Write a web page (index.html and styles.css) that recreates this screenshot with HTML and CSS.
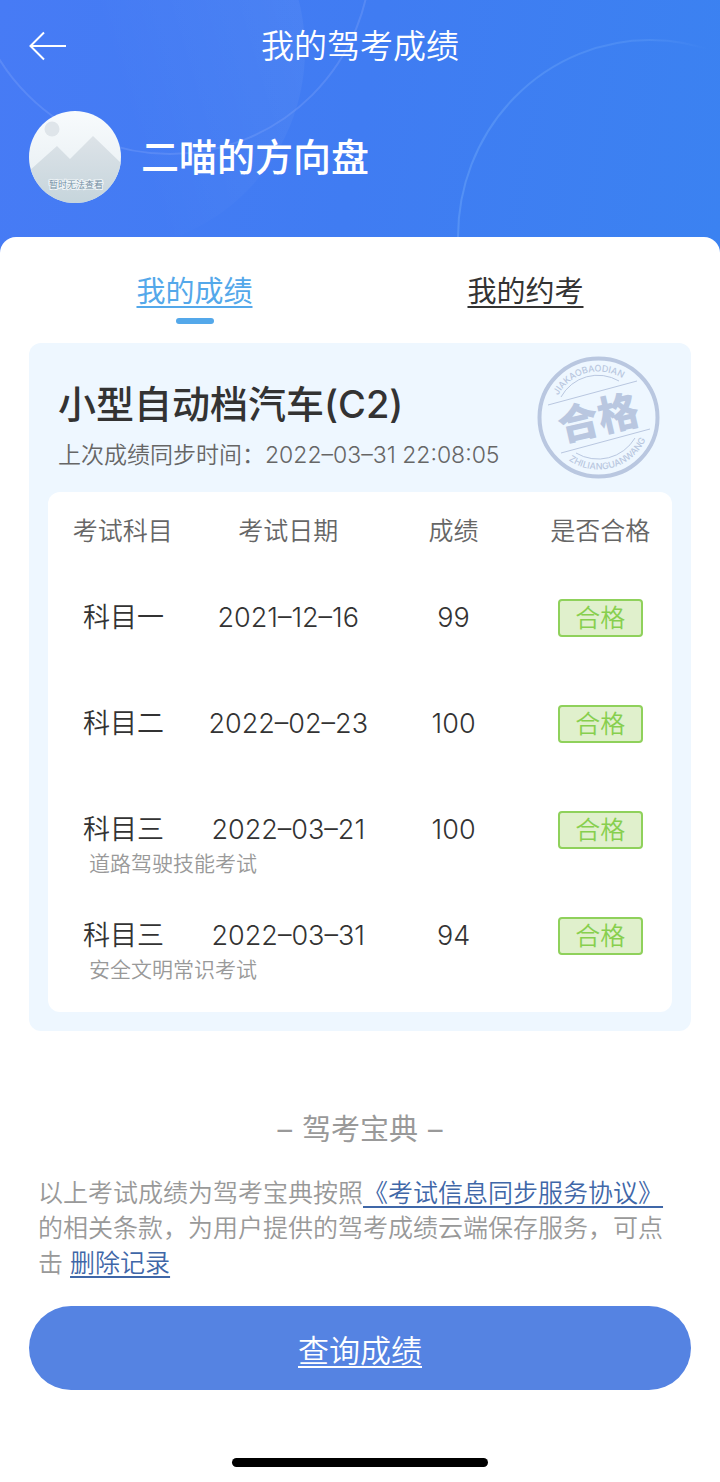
FILE: index.html
```html
<!DOCTYPE html>
<html lang="zh-CN">
<head>
  <meta charset="UTF-8" />
  <meta name="viewport" content="width=device-width, initial-scale=1" />
  <title>我的驾考成绩</title>
  <link rel="stylesheet" href="styles.css">
</head>
<body>
  <header class="header">
    <svg class="header-bg" viewBox="0 0 720 260" preserveAspectRatio="xMidYMin slice" aria-hidden="true">
      <defs>
        <linearGradient id="disk" x1="0" y1="0.300" x2="1" y2="0">
          <stop offset="0.4" stop-color="#fff" stop-opacity="0" />
          <stop offset="1" stop-color="#fff" stop-opacity="0.06" />
        </linearGradient>
        <linearGradient id="arc" x1="0" y1="0" x2="1" y2="0">
          <stop offset="0" stop-color="#6aa4f8" stop-opacity="0.5" />
          <stop offset="0.5" stop-color="#6aa4f8" stop-opacity="0.3" />
          <stop offset="0.65" stop-color="#6aa4f8" stop-opacity="0" />
        </linearGradient>
      </defs>
      <circle cx="105" cy="50" r="200" fill="url(#disk)" />
      <circle cx="170" cy="-47" r="201" fill="none" stroke="#7da2fa" stroke-opacity="0.35" stroke-width="2" />
      <ellipse cx="650" cy="237" rx="192" ry="197" fill="none" stroke="url(#arc)" stroke-width="2" />
    </svg>
    <div class="navbar">
      <button class="back" type="button" aria-label="返回">
        <svg width="38" height="30" viewBox="0 0 38 30" fill="none" stroke="#fff" stroke-width="2">
          <path d="M37 15H2M15 1.500L1.500 15L15 28.500" />
        </svg>
      </button>
      <h1 class="title">我的驾考成绩</h1>
    </div>
    <div class="user">
      <svg class="avatar" viewBox="0 0 92 92" role="img" aria-label="暂时无法查看">
        <defs>
          <linearGradient id="sky" x1="0" y1="0" x2="0" y2="1">
            <stop offset="0" stop-color="#f8fbfd" />
            <stop offset="1" stop-color="#e4ecf0" />
          </linearGradient>
          <linearGradient id="hill" x1="0" y1="0" x2="0" y2="1">
            <stop offset="0" stop-color="#dde3e8" />
            <stop offset="1" stop-color="#c6d5dc" />
          </linearGradient>
          <clipPath id="round"><circle cx="46" cy="46" r="46" /></clipPath>
        </defs>
        <g clip-path="url(#round)">
          <rect width="92" height="92" fill="url(#sky)" />
          <circle cx="23" cy="18" r="7.500" fill="#dfe5ea" />
          <path d="M0 60L28 35L41 48L64 25L92 52V92H0Z" fill="url(#hill)" />
        </g>
        <text class="avatar-text" x="47" y="77" text-anchor="middle">暂时无法查看</text>
      </svg>
      <span class="username">二喵的方向盘</span>
    </div>
  </header>

  <main class="panel">
    <nav class="tabs">
      <a class="tab active" href="#score">我的成绩</a>
      <a class="tab" href="#booking">我的约考</a>
    </nav>

    <section class="card" id="score">
      <div class="card-head">
        <div class="card-title">
          <h2 class="car-type">小型自动档汽车(C2)</h2>
          <p class="sync-time">上次成绩同步时间：2022–03–31 22:08:05</p>
        </div>
        <svg class="stamp" viewBox="0 0 123 123" role="img" aria-label="合格">
          <defs>
            <path id="top-arc" d="M17 49.600A46 46 0 0 1 94 29" />
            <path id="bottom-arc" d="M24.700 98.300A52 52 0 0 0 111.700 75" />
          </defs>
          <circle cx="61.500" cy="61.500" r="59" fill="none" stroke="#b9c7e0" stroke-width="4" />
          <g fill="none" stroke="#b9c7e0" stroke-width="1">
            <path d="M24 41A42 42 0 0 1 82 25" />
            <path d="M39 97A43 43 0 0 0 98 82" />
            <path d="M11 49L100 25M24 97L113 73" />
          </g>
          <text class="stamp-small" text-anchor="middle"><textPath href="#top-arc" startOffset="50%">JIAKAOBAODIAN</textPath></text>
          <text class="stamp-small" text-anchor="middle"><textPath href="#bottom-arc" startOffset="50%">ZHILIANGUANWANG</textPath></text>
          <text class="stamp-big" x="61" y="77" text-anchor="middle" transform="rotate(-13 61 61)">合格</text>
        </svg>
      </div>

      <table class="scores">
        <thead>
          <tr>
            <th class="col-subject">考试科目</th>
            <th class="col-date">考试日期</th>
            <th class="col-score">成绩</th>
            <th class="col-result">是否合格</th>
          </tr>
        </thead>
        <tbody>
          <tr>
            <td class="subject">科目一</td>
            <td>2021–12–16</td>
            <td>99</td>
            <td><span class="pass">合格</span></td>
          </tr>
          <tr>
            <td class="subject">科目二</td>
            <td>2022–02–23</td>
            <td>100</td>
            <td><span class="pass">合格</span></td>
          </tr>
          <tr>
            <td class="subject">科目三<small class="note">道路驾驶技能考试</small></td>
            <td>2022–03–21</td>
            <td>100</td>
            <td><span class="pass">合格</span></td>
          </tr>
          <tr>
            <td class="subject">科目三<small class="note">安全文明常识考试</small></td>
            <td>2022–03–31</td>
            <td>94</td>
            <td><span class="pass">合格</span></td>
          </tr>
        </tbody>
      </table>
    </section>

    <p class="brand"><span>–</span><span>驾考宝典</span><span>–</span></p>
    <p class="terms">以上考试成绩为驾考宝典按照<a href="#agreement">《考试信息同步服务协议》</a>的相关条款，为用户提供的驾考成绩云端保存服务，可点击 <a href="#delete">删除记录</a></p>
    <button class="query" type="button">查询成绩</button>
    <div class="home-bar"></div>
  </main>
</body>
</html>
```

FILE: styles.css
```css
* {
  box-sizing: border-box;
}
body {
  margin: 0;
  background-color: #fff;
  color: #333;
  font-family: Inter, "Noto Sans CJK SC", sans-serif;
  font-size: 27px;
  font-weight: 350;
}
h1, h2, p {
  margin: 0;
  font-weight: 350;
}
button {
  padding: 0;
  border: 0;
  background: none;
  font-family: inherit;
  cursor: pointer;
}

/* Header */
.header {
  position: relative;
  padding: 16px 29px 50px;
  background: linear-gradient(100deg, #477bf5 0%, #407cf2 50%, #3b82f1 100%);
  color: #fff;
}
.header-bg {
  position: absolute;
  top: 0;
  left: 0;
  width: 100%;
  height: 100%;
}
.navbar {
  position: relative;
  display: grid;
  grid-template-columns: 1fr auto 1fr;
  align-items: center;
  height: 60px;
}
.back {
  display: flex;
  justify-self: start;
}
.title {
  font-size: 33px;
  line-height: 48px;
}
.user {
  position: relative;
  display: flex;
  align-items: center;
  gap: 20px;
  margin-top: 35px;
}
.avatar {
  width: 92px;
  height: 92px;
}
.avatar-text {
  font-size: 9px;
  fill: #6f8aa0;
  stroke: #eef4f7;
  stroke-width: 2px;
  paint-order: stroke;
}
.username {
  font-size: 38px;
  font-weight: 500;
  line-height: 56px;
}

/* White panel */
.panel {
  position: relative;
  margin-top: -16px;
  padding: 33px 29px 15px;
  border-radius: 16px 16px 0 0;
  background-color: #fff;
}
.tabs {
  display: flex;
}
.tab {
  flex: 1;
  color: #333;
  font-size: 29px;
  font-weight: 400;
  line-height: 44px;
  text-align: center;
  text-decoration-thickness: 2px;
  text-underline-offset: 4px;
}
.tab::after {
  content: "";
  display: block;
  width: 38px;
  height: 6px;
  margin: 4px auto 0;
  border-radius: 3px;
}
.tab.active {
  color: #54a8ea;
}
.tab.active::after {
  background-color: #54a8ea;
}

/* Score card */
.card {
  margin-top: 19px;
  padding: 13px 19px 19px;
  border-radius: 12px;
  background-color: #eef7ff;
}
.card-head {
  display: flex;
  justify-content: space-between;
  align-items: center;
  padding: 0 12px 13px 10px;
}
.card-title {
  padding-top: 14px;
}
.car-type {
  font-size: 38px;
  font-weight: 500;
  line-height: 56px;
}
.sync-time {
  margin-top: 5px;
  color: #666;
  font-size: 23px;
  line-height: 36px;
}
.stamp {
  width: 123px;
  height: 123px;
}
.stamp-small {
  fill: #b9c7e0;
  font-size: 9px;
  font-weight: 500;
}
.stamp-big {
  fill: #b9c7e0;
  font-size: 41px;
  font-weight: 900;
}
.scores {
  width: 100%;
  table-layout: fixed;
  border-collapse: collapse;
  border-radius: 12px;
  background-color: #fff;
}
.scores th {
  height: 73px;
  padding: 0;
  color: #666;
  font-size: 25px;
  font-weight: 350;
}
.scores td {
  height: 106px;
  padding: 34px 0 0;
  line-height: 38px;
  text-align: center;
  vertical-align: top;
}
.scores tr:last-child td {
  height: 129px;
}
.col-subject { width: 24%; }
.col-date { width: 29%; }
.col-score { width: 24%; }
.col-result { width: 23%; }
.scores .subject {
  padding-left: 35px;
  text-align: left;
}
.note {
  display: block;
  padding-left: 6px;
  color: #999;
  font-size: 21px;
  line-height: 30px;
  white-space: nowrap;
}
.pass {
  display: block;
  width: 85px;
  margin: 0 auto;
  border: 2px solid #8fd15b;
  border-radius: 4px;
  background-color: #e0f0cc;
  color: #87cf4e;
  font-size: 25px;
  line-height: 34px;
}

/* Footer */
.brand {
  display: flex;
  justify-content: center;
  gap: 10px;
  margin-top: 77px;
  color: #999;
  font-size: 29px;
  font-weight: 400;
  line-height: 44px;
}
.terms {
  margin-top: 24px;
  padding: 0 9px;
  color: #999;
  font-size: 25px;
  line-height: 35px;
}
.terms a {
  color: #3f67a8;
  text-decoration-thickness: 2px;
  text-underline-offset: 4px;
}
.query {
  display: block;
  width: 100%;
  height: 84px;
  margin-top: 25px;
  border-radius: 42px;
  background-color: #5583e2;
  color: #fff;
  font-size: 31px;
  font-weight: 350;
  text-decoration: underline;
  text-decoration-thickness: 2px;
  text-underline-offset: 4px;
}
.home-bar {
  width: 256px;
  height: 9px;
  margin: 68px auto 0;
  border-radius: 5px;
  background-color: #000;
}
```
